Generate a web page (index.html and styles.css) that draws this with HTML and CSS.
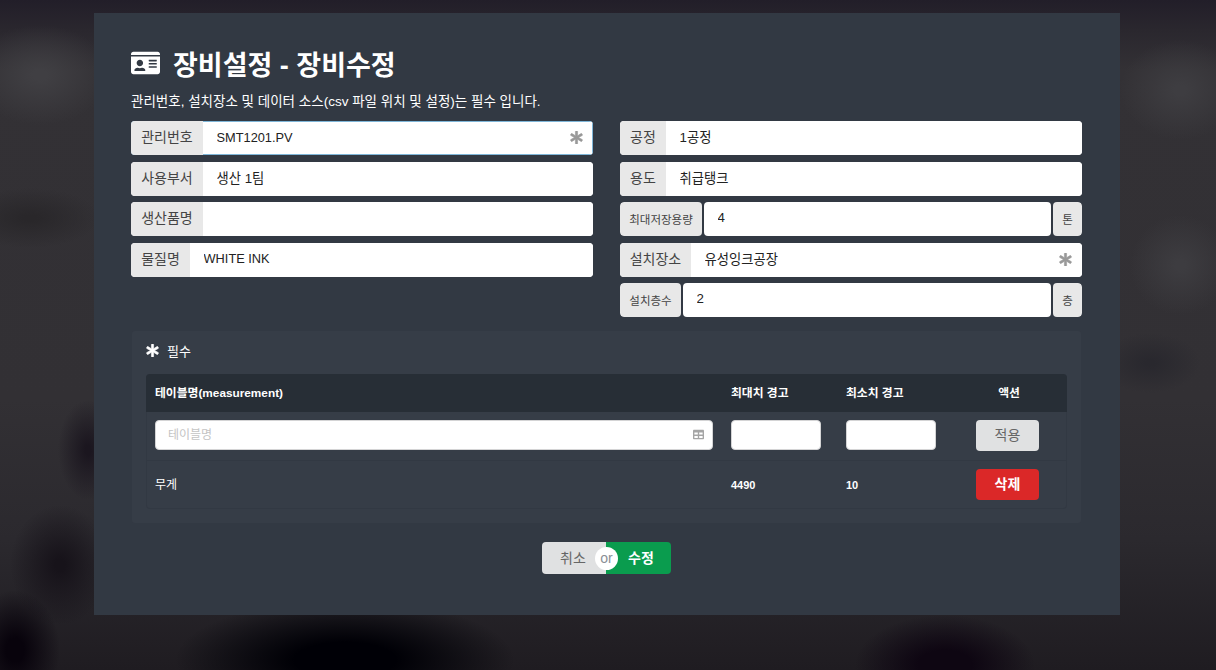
FILE: index.html
```html
<!DOCTYPE html>
<html lang="ko">
<head>
    <meta charset="UTF-8">
    <meta name="viewport" content="width=device-width, initial-scale=1.0">
    <title>장비설정 - 장비수정</title>
    <link rel="stylesheet" href="styles.css">
</head>
<body>
    <svg class="icon-defs" aria-hidden="true">
        <symbol id="i-asterisk" viewBox="0 0 512 512"><path d="M478.21 334.093L336 256l142.21-78.093c11.795-6.477 15.961-21.384 9.232-33.037l-19.48-33.741c-6.728-11.653-21.72-15.499-33.227-8.523L296 186.718l3.475-162.204C299.763 11.061 288.937 0 275.48 0h-38.96c-13.456 0-24.283 11.061-23.994 24.514L216 186.718 77.265 102.607c-11.506-6.976-26.499-3.13-33.227 8.523l-19.48 33.741c-6.728 11.653-2.562 26.56 9.233 33.037L176 256 33.79 334.093c-11.795 6.477-15.961 21.384-9.232 33.037l19.48 33.741c6.728 11.653 21.721 15.499 33.227 8.523L216 325.282l-3.475 162.204C212.237 500.939 223.064 512 236.52 512h38.961c13.456 0 24.283-11.061 23.995-24.514L296 325.282l138.735 84.111c11.506 6.976 26.499 3.13 33.227-8.523l19.48-33.741c6.728-11.653 2.563-26.559-9.232-33.036z"/></symbol>
    </svg>

    <div class="panel">
        <h1 class="page-title">
            <svg class="title-icon" viewBox="0 0 576 512"><path d="M528 32H48C21.5 32 0 53.5 0 80v16h576V80c0-26.5-21.5-48-48-48zM0 432c0 26.5 21.5 48 48 48h480c26.5 0 48-21.5 48-48V128H0v304zm352-232c0-4.4 3.6-8 8-8h144c4.4 0 8 3.6 8 8v16c0 4.4-3.6 8-8 8H360c-4.4 0-8-3.6-8-8v-16zm0 64c0-4.4 3.6-8 8-8h144c4.4 0 8 3.6 8 8v16c0 4.4-3.6 8-8 8H360c-4.4 0-8-3.6-8-8v-16zm0 64c0-4.4 3.6-8 8-8h144c4.4 0 8 3.6 8 8v16c0 4.4-3.6 8-8 8H360c-4.4 0-8-3.6-8-8v-16zM176 192c35.3 0 64 28.7 64 64s-28.7 64-64 64-64-28.7-64-64 28.7-64 64-64zM67.1 396.2C75.5 370.5 99.6 352 128 352h8.2c12.3 5.1 25.7 8 39.8 8s27.6-2.9 39.8-8h8.2c28.4 0 52.5 18.5 60.9 44.2 3.2 9.9-5.2 19.8-15.6 19.8H82.7c-10.4 0-18.8-10-15.6-19.8z"/></svg>
            장비설정 - 장비수정
        </h1>
        <p class="page-desc">관리번호, 설치장소 및 데이터 소스(csv 파일 위치 및 설정)는 필수 입니다.</p>

        <div class="form-columns">
            <div class="form-col">
                <div class="field field-focus">
                    <span class="field-label w-72">관리번호</span>
                    <input class="field-input input-latin" type="text" value="SMT1201.PV">
                    <svg class="req-icon"><use href="#i-asterisk"/></svg>
                </div>
                <div class="field">
                    <span class="field-label w-72">사용부서</span>
                    <input class="field-input" type="text" value="생산 1팀">
                </div>
                <div class="field">
                    <span class="field-label w-72">생산품명</span>
                    <input class="field-input" type="text">
                </div>
                <div class="field">
                    <span class="field-label w-59">물질명</span>
                    <input class="field-input input-latin" type="text" value="WHITE INK">
                </div>
            </div>

            <div class="form-col">
                <div class="field">
                    <span class="field-label w-46">공정</span>
                    <input class="field-input" type="text" value="1공정">
                </div>
                <div class="field">
                    <span class="field-label w-46">용도</span>
                    <input class="field-input" type="text" value="취급탱크">
                </div>
                <div class="field field-split">
                    <span class="field-label label-sm w-82">최대저장용량</span>
                    <input class="field-input" type="text" value="4">
                    <span class="field-label label-sm field-unit">톤</span>
                </div>
                <div class="field">
                    <span class="field-label w-71">설치장소</span>
                    <input class="field-input" type="text" value="유성잉크공장">
                    <svg class="req-icon"><use href="#i-asterisk"/></svg>
                </div>
                <div class="field field-split">
                    <span class="field-label label-sm w-61">설치층수</span>
                    <input class="field-input" type="text" value="2">
                    <span class="field-label label-sm field-unit">층</span>
                </div>
            </div>
        </div>

        <div class="measure-box">
            <div class="measure-title">
                <svg class="measure-icon"><use href="#i-asterisk"/></svg>
                필수
            </div>
            <div class="measure-table">
                <div class="measure-row measure-head">
                    <div>테이블명(measurement)</div>
                    <div>최대치 경고</div>
                    <div>최소치 경고</div>
                    <div class="col-action">액션</div>
                </div>
                <div class="measure-row measure-edit">
                    <div class="table-input">
                        <input type="text" placeholder="테이블명">
                        <svg class="table-icon" viewBox="0 0 512 512"><path d="M464 32H48C21.49 32 0 53.49 0 80v352c0 26.51 21.49 48 48 48h416c26.51 0 48-21.49 48-48V80c0-26.51-21.49-48-48-48zM224 416H64v-96h160v96zm0-160H64v-96h160v96zm224 160H288v-96h160v96zm0-160H288v-96h160v96z"/></svg>
                    </div>
                    <div><input class="limit-input" type="text"></div>
                    <div><input class="limit-input" type="text"></div>
                    <div><button class="btn btn-grey btn-row">적용</button></div>
                </div>
                <div class="measure-row measure-data">
                    <div class="cell-name">무게</div>
                    <div>4490</div>
                    <div>10</div>
                    <div><button class="btn btn-red btn-row">삭제</button></div>
                </div>
            </div>
        </div>

        <div class="form-actions">
            <button class="btn btn-grey btn-cancel">취소</button>
            <span class="or-badge">or</span>
            <button class="btn btn-green btn-save">수정</button>
        </div>
    </div>
</body>
</html>
```

FILE: styles.css
```css
* {
    box-sizing: border-box;
}
html, body {
    height: 100%;
}
body {
    margin: 0;
    overflow: hidden;
    font-family: "Liberation Sans", "Noto Sans CJK KR", sans-serif;
    font-size: 14px;
    color: #fff;
    background-color: #323034;
    background-image:
        radial-gradient(ellipse 170px 60px at 345px 660px, #000006 30%, rgba(0, 0, 6, 0) 100%),
        radial-gradient(ellipse 90px 50px at 945px 665px, #0e0612 30%, rgba(14, 6, 18, 0) 100%),
        radial-gradient(ellipse 45px 60px at 15px 650px, #08030c 20%, rgba(8, 3, 12, 0) 100%),
        radial-gradient(ellipse 50px 60px at 60px 565px, #17131a 10%, rgba(23, 19, 26, 0) 100%),
        radial-gradient(ellipse 30px 50px at 88px 450px, #1b161f 10%, rgba(27, 22, 31, 0) 100%),
        radial-gradient(ellipse 70px 30px at 30px 218px, #29272a 10%, rgba(41, 39, 42, 0) 100%),
        radial-gradient(ellipse 70px 50px at 40px 75px, #403f43 10%, rgba(64, 63, 67, 0) 100%),
        radial-gradient(ellipse 60px 50px at 1180px 90px, #3e3d41 10%, rgba(62, 61, 65, 0) 100%),
        radial-gradient(ellipse 50px 50px at 1180px 265px, #3d3c40 10%, rgba(61, 60, 64, 0) 100%),
        radial-gradient(ellipse 50px 30px at 1150px 363px, #29282e 10%, rgba(41, 40, 46, 0) 100%),
        linear-gradient(#221e29 0, #2a272e 30px, #333135 70px, #323034 400px, #2b292e 540px, #1f1c21 670px);
}
.icon-defs {
    display: none;
}
.panel {
    width: 1026px;
    height: 602px;
    margin: 13px 0 0 94px;
    padding: 35px 38px 0 37px;
    background-color: #323943;
}
.page-title {
    display: flex;
    align-items: center;
    gap: 13px;
    height: 30px;
    margin: 0;
    font-size: 27px;
    font-weight: bold;
}
.title-icon {
    width: 29px;
    height: 26px;
    fill: #fff;
}
.page-desc {
    margin: 14px 0 9px;
    height: 20px;
    line-height: 20px;
    font-size: 13.5px;
}

.form-columns {
    display: flex;
    gap: 27px;
    height: 196px;
}
.form-col {
    width: 462px;
    display: flex;
    flex-direction: column;
    gap: 6.5px;
}
.field {
    position: relative;
    display: flex;
    height: 34px;
    border-radius: 4px;
    background-color: #fff;
    overflow: hidden;
}
.field-focus {
    box-shadow: inset 0 0 0 1px #7fb6d8;
}
.field-label {
    flex: none;
    padding-top: 5px;
    text-align: center;
    color: #444;
    background-color: #e8e8e8;
}
.label-sm {
    padding-top: 9px;
    font-size: 11.5px;
}
.w-46 { width: 46px; }
.w-59 { width: 59px; }
.w-61 { width: 61px; }
.w-71 { width: 71px; }
.w-72 { width: 72px; }
.w-82 { width: 82px; }
.field-input {
    flex: 1;
    min-width: 0;
    border: none;
    outline: none;
    padding: 0 13px 3px 13.5px;
    font: inherit;
    font-size: 13.3px;
    color: #222;
    background: #fff;
}
.input-latin {
    font-size: 12.8px;
}
.req-icon {
    position: absolute;
    top: 10px;
    right: 10px;
    width: 13px;
    height: 13px;
    fill: #999;
    stroke: #999;
    stroke-width: 24px;
}
.field-focus .field-input {
    margin: 1px 1px 1px 0;
    padding-bottom: 2px;
}
.field-split {
    gap: 2px;
    background: none;
}
.field-split .field-label {
    border-radius: 4px;
}
.field-split .field-input {
    border-radius: 4px;
}
.field-unit {
    width: 29px;
}

.measure-box {
    height: 192px;
    margin: 14px 0 0 1px;
    width: 949px;
    padding: 0 14px;
    border-radius: 3px;
    background-color: #363d47;
}
.measure-title {
    display: flex;
    align-items: center;
    gap: 8px;
    height: 43px;
    padding-bottom: 4px;
    font-size: 13px;
}
.measure-icon {
    width: 13px;
    height: 13px;
    fill: #fff;
    stroke: #fff;
    stroke-width: 24px;
}
.measure-table {
    width: 921px;
    border: 1px solid #323943;
    border-top: none;
    border-radius: 4px;
    font-size: 11px;
    font-weight: bold;
}
.measure-row {
    display: grid;
    grid-template-columns: 576px 115px 130px 100px;
    align-items: center;
    margin: 0 -1px;
}
.measure-row > div {
    padding-left: 9px;
}
.measure-head {
    height: 38px;
    padding-bottom: 3px;
    border-radius: 4px 4px 0 0;
    font-size: 11.8px;
    background-color: #272e36;
}
.measure-head .col-action {
    padding: 0 16px 0 0;
    text-align: center;
}
.measure-edit {
    height: 49px;
    padding-bottom: 2px;
    border-bottom: 1px solid #323943;
}
.measure-data {
    height: 47px;
}
.measure-data .cell-name {
    padding-bottom: 2px;
    font-size: 12px;
    font-weight: normal;
}
.table-input {
    position: relative;
    padding-right: 9px;
}
.table-input input,
.limit-input {
    display: block;
    height: 30px;
    border: 1px solid #d4d4d5;
    border-radius: 4px;
    outline: none;
    background: #fff;
    font: 12px "Liberation Sans", "Noto Sans CJK KR", sans-serif;
}
.table-input input {
    width: 558px;
    padding: 0 12px;
}
.table-input input::placeholder {
    color: #c4c4c4;
}
.table-icon {
    position: absolute;
    top: 9px;
    right: 18px;
    width: 11px;
    height: 11px;
    fill: #a5a5a5;
}
.limit-input {
    width: 90px;
}

.btn {
    border: none;
    border-radius: 4px;
    padding: 0 0 3px;
    font-family: inherit;
    font-size: 14px;
    font-weight: bold;
}
.btn-row {
    display: block;
    width: 63px;
    height: 31px;
}
.btn-grey {
    color: #666;
    font-weight: normal;
    background-color: #e0e1e2;
}
.btn-red {
    color: #fff;
    background-color: #db2828;
}
.btn-green {
    color: #fff;
    background-color: #0a9c4e;
}
.form-actions {
    position: relative;
    display: flex;
    justify-content: center;
    margin: 19px 0 0 0;
}
.btn-cancel,
.btn-save {
    height: 32px;
    width: 64px;
}
.btn-cancel {
    padding-right: 2px;
    border-radius: 4px 0 0 4px;
}
.btn-save {
    width: 65px;
    padding-left: 5px;
    border-radius: 0 4px 4px 0;
}
.or-badge {
    position: absolute;
    top: 5px;
    left: 464px;
    width: 23px;
    height: 23px;
    border-radius: 50%;
    line-height: 22px;
    text-align: center;
    color: #8a8f96;
    background-color: #fff;
}
```
